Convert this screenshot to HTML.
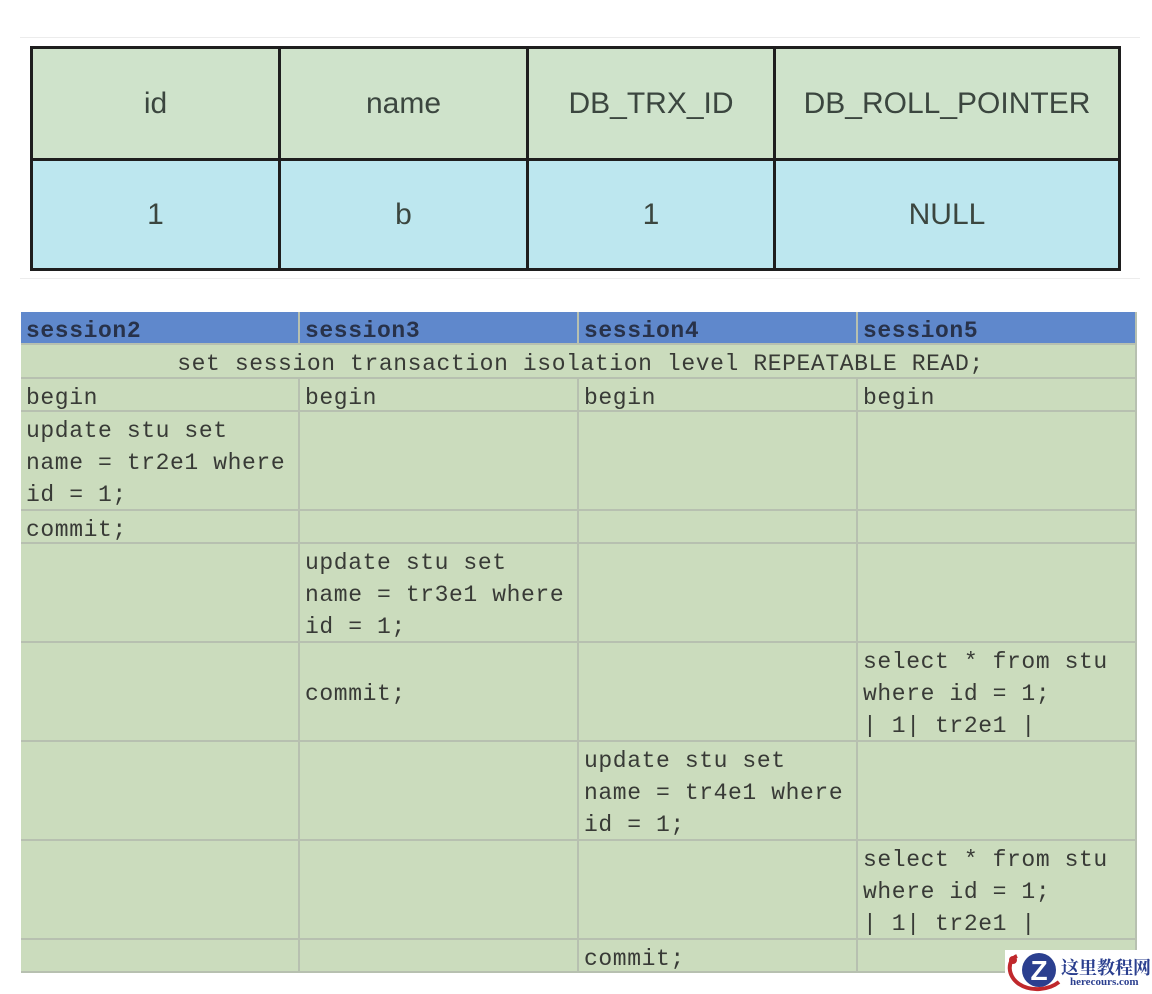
<!DOCTYPE html>
<html><head><meta charset="utf-8"><style>
*{margin:0;padding:0;box-sizing:border-box}
body{width:1152px;height:994px;background:#fff;position:relative;overflow:hidden}
.a{position:absolute}
.t{font-family:"Liberation Sans",sans-serif;font-size:30px;color:#3b463f;display:flex;align-items:center;justify-content:center;border:3px solid #1e1e1e}
.g{background:#cfe3cb}.c{background:#bde7ef}
.m{font-family:"Liberation Mono",monospace;font-size:23px;letter-spacing:0.6px;color:#383a36;line-height:32px;padding:3px 0 0 5px;white-space:pre;background:#cbdcbd;border-right:2px solid #b7c0b0;border-bottom:2px solid #b7c0b0}
.h{background:#5f88cc;font-weight:bold;color:#28324a}
.tick{position:absolute;background:#ececec}
</style></head><body>
<div class="tick" style="left:20px;top:37px;width:1120px;height:1px"></div>
<div class="tick" style="left:20px;top:278px;width:1120px;height:1px"></div>

<div class="a t g" style="left:30px;top:46px;width:251px;height:115px">id</div>
<div class="a t g" style="left:278px;top:46px;width:251px;height:115px">name</div>
<div class="a t g" style="left:526px;top:46px;width:250px;height:115px">DB_TRX_ID</div>
<div class="a t g" style="left:773px;top:46px;width:348px;height:115px">DB_ROLL_POINTER</div>
<div class="a t c" style="left:30px;top:158px;width:251px;height:113px">1</div>
<div class="a t c" style="left:278px;top:158px;width:251px;height:113px">b</div>
<div class="a t c" style="left:526px;top:158px;width:250px;height:113px">1</div>
<div class="a t c" style="left:773px;top:158px;width:348px;height:113px">NULL</div>

<div class="a" style="left:21px;top:312px;width:1116px;height:661px;border-left:2px solid #b7c0b0;border-top:2px solid #b7c0b0"></div>

<div class="a m h" style="left:21px;top:312px;width:279px;height:33px">session2</div>
<div class="a m h" style="left:300px;top:312px;width:279px;height:33px">session3</div>
<div class="a m h" style="left:579px;top:312px;width:279px;height:33px">session4</div>
<div class="a m h" style="left:858px;top:312px;width:279px;height:33px">session5</div>

<div class="a m" style="left:21px;top:345px;width:1116px;height:34px;text-align:center">set session transaction isolation level REPEATABLE READ;</div>

<div class="a m" style="left:21px;top:379px;width:279px;height:33px">begin</div>
<div class="a m" style="left:300px;top:379px;width:279px;height:33px">begin</div>
<div class="a m" style="left:579px;top:379px;width:279px;height:33px">begin</div>
<div class="a m" style="left:858px;top:379px;width:279px;height:33px">begin</div>

<div class="a m" style="left:21px;top:412px;width:279px;height:99px">update stu set
name = tr2e1 where
id = 1;</div>
<div class="a m" style="left:300px;top:412px;width:279px;height:99px"></div>
<div class="a m" style="left:579px;top:412px;width:279px;height:99px"></div>
<div class="a m" style="left:858px;top:412px;width:279px;height:99px"></div>

<div class="a m" style="left:21px;top:511px;width:279px;height:33px">commit;</div>
<div class="a m" style="left:300px;top:511px;width:279px;height:33px"></div>
<div class="a m" style="left:579px;top:511px;width:279px;height:33px"></div>
<div class="a m" style="left:858px;top:511px;width:279px;height:33px"></div>

<div class="a m" style="left:21px;top:544px;width:279px;height:99px"></div>
<div class="a m" style="left:300px;top:544px;width:279px;height:99px">update stu set
name = tr3e1 where
id = 1;</div>
<div class="a m" style="left:579px;top:544px;width:279px;height:99px"></div>
<div class="a m" style="left:858px;top:544px;width:279px;height:99px"></div>

<div class="a m" style="left:21px;top:643px;width:279px;height:99px"></div>
<div class="a m" style="left:300px;top:643px;width:279px;height:99px">
commit;</div>
<div class="a m" style="left:579px;top:643px;width:279px;height:99px"></div>
<div class="a m" style="left:858px;top:643px;width:279px;height:99px">select * from stu
where id = 1;
| 1| tr2e1 |</div>

<div class="a m" style="left:21px;top:742px;width:279px;height:99px"></div>
<div class="a m" style="left:300px;top:742px;width:279px;height:99px"></div>
<div class="a m" style="left:579px;top:742px;width:279px;height:99px">update stu set
name = tr4e1 where
id = 1;</div>
<div class="a m" style="left:858px;top:742px;width:279px;height:99px"></div>

<div class="a m" style="left:21px;top:841px;width:279px;height:99px"></div>
<div class="a m" style="left:300px;top:841px;width:279px;height:99px"></div>
<div class="a m" style="left:579px;top:841px;width:279px;height:99px"></div>
<div class="a m" style="left:858px;top:841px;width:279px;height:99px">select * from stu
where id = 1;
| 1| tr2e1 |</div>

<div class="a m" style="left:21px;top:940px;width:279px;height:33px"></div>
<div class="a m" style="left:300px;top:940px;width:279px;height:33px"></div>
<div class="a m" style="left:579px;top:940px;width:279px;height:33px">commit;</div>
<div class="a m" style="left:858px;top:940px;width:279px;height:33px"></div>

<div class="a" style="left:1005px;top:950px;width:147px;height:44px;background:#fff"></div>
<svg class="a" style="left:1005px;top:950px" width="60" height="44" viewBox="0 0 60 44">
<path d="M12 6 C2 10 2 26 14 34 C26 42 44 40 54 32" stroke="#c0282c" stroke-width="4" fill="none"/>
<circle cx="8" cy="10" r="4" fill="#c0282c"/>
<circle cx="34" cy="20" r="17" fill="#2b3f8f"/>
<text x="34" y="30" font-family="Liberation Sans,sans-serif" font-weight="bold" font-size="28" fill="#fff" text-anchor="middle">Z</text>
</svg>
<div class="a" style="left:1061px;top:954px;font-family:'Liberation Serif','Noto Serif CJK SC',serif;font-weight:bold;font-size:18px;color:#2b3f8f;white-space:nowrap">这里教程网</div>
<div class="a" style="left:1070px;top:976px;font-family:'Liberation Serif',serif;font-weight:bold;font-size:11px;color:#2b3f8f;white-space:nowrap">herecours.com</div>
</body></html>
